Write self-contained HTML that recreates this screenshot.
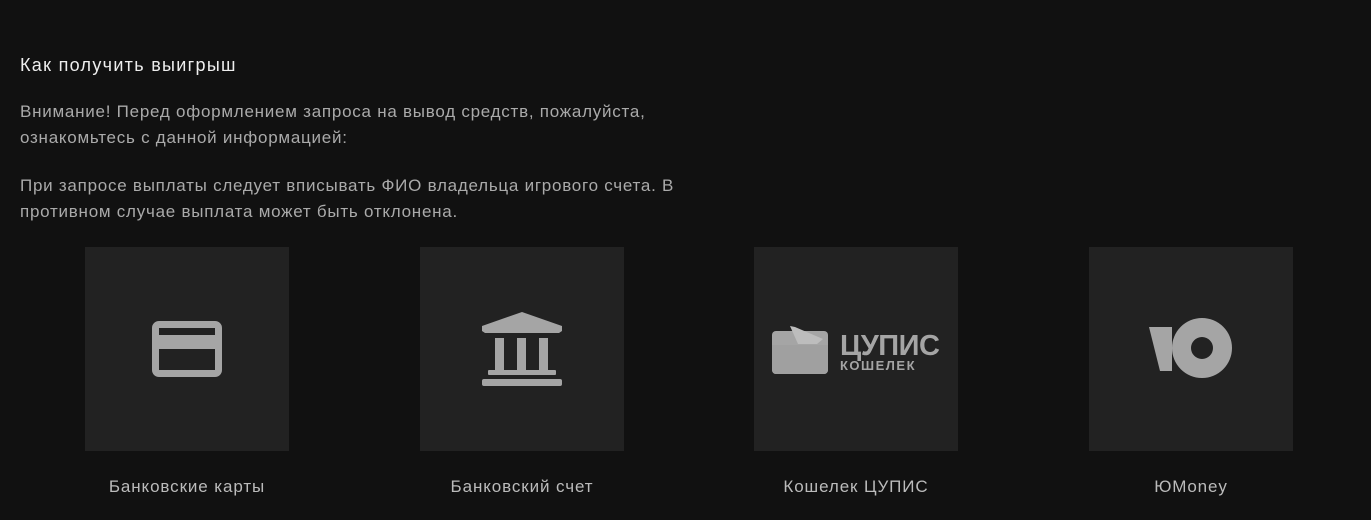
<!DOCTYPE html>
<html><head><meta charset="utf-8"><style>
body{margin:0;width:1371px;height:520px;background:#111;font-family:"Liberation Sans",sans-serif;overflow:hidden;position:relative}
h1{position:absolute;left:20px;top:55px;margin:0;font-size:18px;letter-spacing:1.3px;font-weight:normal;color:#eee}
p{position:absolute;left:20px;margin:0;font-size:17px;letter-spacing:0.75px;line-height:26px;color:#aaa;width:720px}
.t{position:absolute;top:247px;width:204px;height:204px;background:#222}
.l{position:absolute;top:477px;width:300px;text-align:center;font-size:17px;letter-spacing:0.9px;color:#bbb}
svg{position:absolute;left:0;top:0}
</style></head><body>
<h1>Как получить выигрыш</h1>
<p style="top:99px">Внимание! Перед оформлением запроса на вывод средств, пожалуйста,<br>ознакомьтесь с данной информацией:</p>
<p style="top:173px">При запросе выплаты следует вписывать ФИО владельца игрового счета. В<br>противном случае выплата может быть отклонена.</p>
<div class="t" style="left:85px"></div>
<div class="t" style="left:420px"></div>
<div class="t" style="left:754px"></div>
<div class="t" style="left:1089px"></div>
<svg width="1371" height="520">
<g fill="#a5a5a5">
<path fill-rule="evenodd" d="M159 321h56a7 7 0 0 1 7 7v42a7 7 0 0 1-7 7h-56a7 7 0 0 1-7-7v-42a7 7 0 0 1 7-7zM159 328v7h56v-7zM159 349v21h56v-21z"/>
<path d="M522 312L562 326v5l-3 2h-74l-3-2v-5z"/>
<rect x="495" y="338" width="9" height="32"/><rect x="517" y="338" width="9" height="32"/><rect x="539" y="338" width="9" height="32"/>
<rect x="488" y="370" width="68" height="5" rx="1"/><rect x="482" y="379" width="80" height="7" rx="2"/>
<rect x="772" y="331" width="56" height="43" rx="4"/>
<path d="M790 326l5 1l28 12l-6 5h-19z" fill="#bdbdbd"/>
<path d="M772 345h56v25a4 4 0 0 1-4 4h-48a4 4 0 0 1-4-4z" fill="#a0a0a0"/>
<path fill-rule="evenodd" d="M1202 318a30 30 0 1 1 0 60a30 30 0 1 1 0-60zM1202 337a11 11 0 1 0 0 22a11 11 0 1 0 0-22z"/>
<path d="M1149 327h23v44h-12z"/>
</g>
<text x="840" y="355" fill="#a5a5a5" font-size="29" font-weight="bold" font-family="Liberation Sans,sans-serif" textLength="100">ЦУПИС</text>
<text x="840" y="370" fill="#a5a5a5" font-size="13" font-weight="bold" font-family="Liberation Sans,sans-serif" letter-spacing="1.5">КОШЕЛЕК</text>
</svg>
<div class="l" style="left:37px">Банковские карты</div>
<div class="l" style="left:372px">Банковский счет</div>
<div class="l" style="left:706px">Кошелек ЦУПИС</div>
<div class="l" style="left:1041px">ЮMoney</div>
</body></html>
